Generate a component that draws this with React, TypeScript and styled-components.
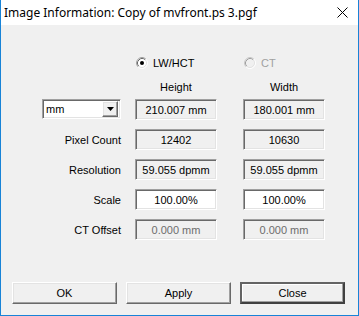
import { Fragment } from 'react'
import styled, { createGlobalStyle, css } from 'styled-components'

const GlobalStyle = createGlobalStyle`
  html, body {
    margin: 0;
    padding: 0;
    background: #f0f0f0;
  }
  * {
    box-sizing: border-box;
  }
`

const ui = css`
  font-family: 'Liberation Sans', Arial, sans-serif;
  font-size: 11px;
  color: #000;
`

const sunken = css`
  border: 1px solid;
  border-color: #a0a0a0 #fff #fff #a0a0a0;
  box-shadow: inset 1px 1px #696969, inset -1px -1px #e3e3e3;
`

const raised = css`
  border: 1px solid;
  border-color: #fff #696969 #696969 #fff;
  box-shadow: inset -1px -1px #a0a0a0, inset 1px 1px #e3e3e3;
`

// label column, Height column, Width column (Width sits 12px further right)
const columns = css`
  display: grid;
  grid-template-columns: 120px 82px 94px;
  column-gap: 14px;
  & > :nth-child(3n) {
    margin-left: 12px;
  }
`

const Window = styled.div`
  width: 359px;
  height: 316px;
  display: flex;
  flex-direction: column;
  border: 1px solid #1883d7;
  border-top: none;
  background: #f0f0f0;
`

const TitleBar = styled.div`
  height: 25px;
  flex: none;
  display: flex;
  align-items: center;
  justify-content: space-between;
  background: #fff;
  padding: 0 10px 0 3px;
  font-family: 'Noto Sans', 'Open Sans', sans-serif;
  font-size: 12px;
  color: #000;
`

const Body = styled.div`
  flex: 1;
  display: flex;
  flex-direction: column;
  padding: 31px 12px 0 0;
  ${ui}
`

const RadioRow = styled.div`
  ${columns}
  height: 13px;
`

const Radio = styled.label<{ disabled?: boolean }>`
  display: flex;
  align-items: center;
  gap: 5px;
  padding-left: 1px;
  color: ${({ disabled }) => (disabled ? '#a0a0a0' : '#000')};
`

const HeaderRow = styled.div`
  ${columns}
  margin: 11px 0 5px;
  line-height: 14px;
`

const Header = styled.div`
  text-align: center;
`

const FieldGrid = styled.div`
  ${columns}
  grid-auto-rows: 21px;
  row-gap: 9px;
`

const Label = styled.div`
  display: flex;
  align-items: center;
  justify-content: flex-end;
`

const Field = styled.div<{ editable?: boolean; disabled?: boolean }>`
  ${sunken}
  display: flex;
  align-items: center;
  justify-content: center;
  white-space: nowrap;
  background: ${({ editable }) => (editable ? '#fff' : '#f0f0f0')};
  color: ${({ disabled }) => (disabled ? '#6d6d6d' : '#000')};
`

const Combo = styled.div`
  ${sunken}
  justify-self: end;
  width: 79px;
  height: 20px;
  background: #fff;
  display: flex;
  align-items: center;
  justify-content: space-between;
  padding: 2px 2px 2px 3px;
`

const ComboButton = styled.div`
  ${raised}
  width: 16px;
  height: 16px;
  background: #f0f0f0;
  display: flex;
  align-items: center;
  justify-content: center;
`

const ButtonRow = styled.div`
  display: flex;
  gap: 9px;
  margin-top: auto;
  margin-bottom: 11px;
  padding-left: 11px;
`

const Button = styled.button<{ primary?: boolean }>`
  ${ui}
  width: 105px;
  height: 22px;
  padding: 0;
  background: #f0f0f0;
  ${raised}
  ${({ primary }) =>
    primary &&
    css`
      border: 2px solid;
      border-color: #646464 #404040 #404040 #646464;
      box-shadow: inset -1px -1px #a0a0a0, inset 1px 1px #fff;
    `}
`

const RadioIcon = ({ checked, disabled }: { checked?: boolean; disabled?: boolean }) => (
  <svg width="12" height="12" viewBox="0 0 12 12">
    <circle cx="6" cy="6" r="5" fill={disabled ? '#f0f0f0' : '#fff'} />
    <path d="M2.11 9.89 A5.5 5.5 0 0 1 9.89 2.11" fill="none" stroke={disabled ? '#c8c8c8' : '#a0a0a0'} />
    <path d="M2.82 9.18 A4.5 4.5 0 0 1 9.18 2.82" fill="none" stroke={disabled ? '#a0a0a0' : '#696969'} />
    <path d="M9.89 2.11 A5.5 5.5 0 0 1 2.11 9.89" fill="none" stroke="#fff" />
    <path d="M9.18 2.82 A4.5 4.5 0 0 1 2.82 9.18" fill="none" stroke="#e3e3e3" />
    {checked && <circle cx="6" cy="6" r="2" fill="#000" />}
  </svg>
)

const CloseIcon = () => (
  <svg width="11" height="11" viewBox="0 0 11 11">
    <path d="M0.5 0.5 L10.5 10.5 M10.5 0.5 L0.5 10.5" stroke="#000" strokeWidth="1" />
  </svg>
)

const rows = [
  { label: 'Pixel Count', height: '12402', width: '10630' },
  { label: 'Resolution', height: '59.055 dpmm', width: '59.055 dpmm' },
  { label: 'Scale', height: '100.00%', width: '100.00%', editable: true },
  { label: 'CT Offset', height: '0.000 mm', width: '0.000 mm', disabled: true },
]

export default function App() {
  return (
    <>
      <GlobalStyle />
      <Window>
        <TitleBar>
          <span>Image Information: Copy of mvfront.ps 3.pgf</span>
          <CloseIcon />
        </TitleBar>
        <Body>
          <RadioRow>
            <span />
            <Radio>
              <RadioIcon checked />
              LW/HCT
            </Radio>
            <Radio disabled>
              <RadioIcon disabled />
              CT
            </Radio>
          </RadioRow>
          <HeaderRow>
            <span />
            <Header>Height</Header>
            <Header>Width</Header>
          </HeaderRow>
          <FieldGrid>
            <Combo>
              <span>mm</span>
              <ComboButton>
                <svg width="7" height="4" viewBox="0 0 7 4">
                  <path d="M0 0 H7 L3.5 4 Z" fill="#000" />
                </svg>
              </ComboButton>
            </Combo>
            <Field>210.007 mm</Field>
            <Field>180.001 mm</Field>
            {rows.map((r) => (
              <Fragment key={r.label}>
                <Label>{r.label}</Label>
                <Field editable={r.editable} disabled={r.disabled}>
                  {r.height}
                </Field>
                <Field editable={r.editable} disabled={r.disabled}>
                  {r.width}
                </Field>
              </Fragment>
            ))}
          </FieldGrid>
          <ButtonRow>
            <Button>OK</Button>
            <Button>Apply</Button>
            <Button primary>Close</Button>
          </ButtonRow>
        </Body>
      </Window>
    </>
  )
}
